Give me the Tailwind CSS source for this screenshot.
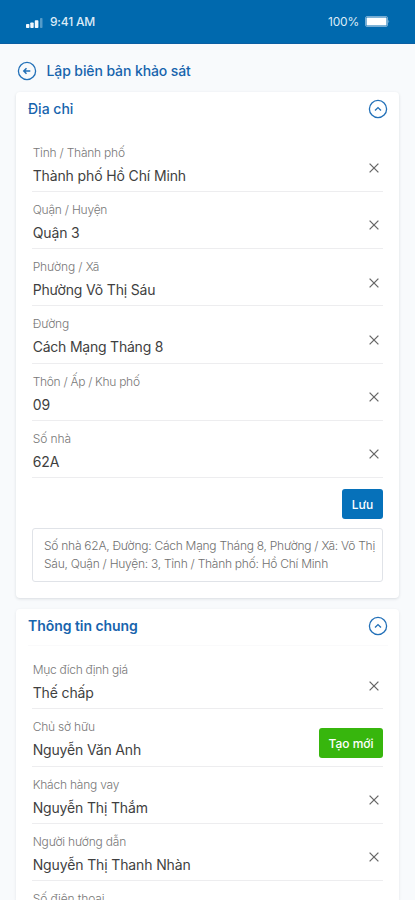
<!DOCTYPE html>
<html lang="vi">
<head>
<meta charset="utf-8">
<title>Lập biên bản khảo sát</title>
<script src="https://cdn.jsdelivr.net/npm/@tailwindcss/browser@4"></script>
</head>
<body class="bg-[#f8fafc] font-['Inter','Noto_Sans',sans-serif] w-[415px] h-[900px] overflow-hidden">
<svg class="hidden">
  <symbol id="x" viewBox="0 0 10 10"><path d="M.6.6 9.4 9.4M9.4.6.6 9.4" fill="none" stroke="#686868" stroke-width="1.3"/></symbol>
  <symbol id="up" viewBox="0 0 20 20"><circle cx="10" cy="10" r="8.6" fill="none" stroke="#2270b8" stroke-width="1.3"/><path d="M7 11.4 10 8.6l3 2.8" fill="none" stroke="#2270b8" stroke-width="1.4"/></symbol>
</svg>
<header class="h-11 bg-[#0069ae] flex items-center justify-between pl-[26px] pr-[25px] text-white border-b border-[#0a5fa3]">
  <div class="flex items-center gap-[7px]">
    <svg class="w-[17px] h-[10px] mt-[2px]" viewBox="0 0 17 10" fill="#f2f8fd"><rect y="6" width="3.4" height="4" rx=".8"/><rect x="4.3" y="4.5" width="3.4" height="5.5" rx=".8"/><rect x="8.8" y="2.2" width="3.6" height="7.8" rx=".8"/><rect x="14" width="2.5" height="10" rx=".8" opacity=".35"/></svg>
    <span class="text-[12px] font-medium tracking-[-0.2px] text-[#dcebf7] pt-px">9:41 AM</span>
  </div>
  <div class="flex items-center gap-1.5">
    <span class="text-[12px] tracking-[-0.2px] text-[#dcebf7] pt-px">100%</span>
    <svg class="w-[25px] h-[11px]" viewBox="0 0 25 11"><rect x=".5" y=".5" width="22" height="10" rx="1.5" fill="none" stroke="#76acd3"/><rect x="1.5" y="1.5" width="20" height="8" rx=".6" fill="#fff"/><path d="M23.5 3.8q1.4 1.7 0 3.4z" fill="#a5cae5"/></svg>
  </div>
</header>
<div class="h-12 flex items-center pl-[16.5px] pt-[5px] gap-[10px]">
  <svg class="size-5" viewBox="0 0 20 20" fill="none" stroke="#2270b8"><circle cx="10" cy="10" r="8.6" stroke-width="1.3"/><path d="M13.3 10H7.5M9.5 7.3 6.8 10l2.7 2.7" stroke-width="1.5"/></svg>
  <h1 class="text-[14px] font-medium tracking-[-0.1px] text-[#1764ad] whitespace-nowrap">Lập biên bản khảo sát</h1>
</div>
<main class="px-4 flex flex-col gap-[11px]">
  <section class="h-[506px] bg-white rounded-[4px] shadow-[0_1px_3px_rgba(30,41,59,0.14)] px-4">
    <div class="h-[42.5px] -ml-1 -mr-[5px] flex items-center justify-between pb-[9px]">
      <h2 class="text-[14px] font-medium text-[#1764ad] whitespace-nowrap">Địa chỉ</h2><svg class="size-5"><use href="#up"/></svg>
    </div>
    <div class="h-[57.25px] border-b border-[#ededef] flex justify-between pt-[9px] pr-1"><div class="whitespace-nowrap pl-[0.7px]"><p class="text-[12px] leading-[17px] font-light tracking-[-0.22px] text-[#787878]">Tỉnh / Thành phố</p><p class="text-[14px] leading-[20px] mt-[5px] tracking-[-0.13px] text-[#3f3f3f]">Thành phố Hồ Chí Minh</p></div><svg class="size-[10px] mt-[19.5px]"><use href="#x"/></svg></div>
    <div class="h-[57.25px] border-b border-[#ededef] flex justify-between pt-[9px] pr-1"><div class="whitespace-nowrap pl-[0.7px]"><p class="text-[12px] leading-[17px] font-light tracking-[-0.22px] text-[#787878]">Quận / Huyện</p><p class="text-[14px] leading-[20px] mt-[5px] tracking-[-0.13px] text-[#3f3f3f]">Quận 3</p></div><svg class="size-[10px] mt-[19.5px]"><use href="#x"/></svg></div>
    <div class="h-[57.25px] border-b border-[#ededef] flex justify-between pt-[9px] pr-1"><div class="whitespace-nowrap pl-[0.7px]"><p class="text-[12px] leading-[17px] font-light tracking-[-0.1px] text-[#787878]">Phường / Xã</p><p class="text-[14px] leading-[20px] mt-[5px] tracking-[-0.18px] text-[#3f3f3f]">Phường Võ Thị Sáu</p></div><svg class="size-[10px] mt-[19.5px]"><use href="#x"/></svg></div>
    <div class="h-[57.25px] border-b border-[#ededef] flex justify-between pt-[9px] pr-1"><div class="whitespace-nowrap pl-[0.7px]"><p class="text-[12px] leading-[17px] font-light tracking-[-0.1px] text-[#787878]">Đường</p><p class="text-[14px] leading-[20px] mt-[5px] tracking-[-0.22px] text-[#3f3f3f]">Cách Mạng Tháng 8</p></div><svg class="size-[10px] mt-[19.5px]"><use href="#x"/></svg></div>
    <div class="h-[57.25px] border-b border-[#ededef] flex justify-between pt-[9px] pr-1"><div class="whitespace-nowrap pl-[0.7px]"><p class="text-[12px] leading-[17px] font-light tracking-[-0.3px] text-[#787878]">Thôn / Ấp / Khu phố</p><p class="text-[14px] leading-[20px] mt-[5px] tracking-[-0.13px] text-[#3f3f3f]">09</p></div><svg class="size-[10px] mt-[19.5px]"><use href="#x"/></svg></div>
    <div class="h-[57.25px] border-b border-[#ededef] flex justify-between pt-[9px] pr-1"><div class="whitespace-nowrap pl-[0.7px]"><p class="text-[12px] leading-[17px] font-light tracking-[-0.1px] text-[#787878]">Số nhà</p><p class="text-[14px] leading-[20px] mt-[5px] tracking-[-0.13px] text-[#3f3f3f]">62A</p></div><svg class="size-[10px] mt-[19.5px]"><use href="#x"/></svg></div>
    <div class="flex justify-end pt-[11px]"><button class="w-[41px] h-[30px] rounded-[3px] bg-[#0671ba] text-white text-[12px] font-medium pt-px">Lưu</button></div>
    <div class="mt-[9px] h-[54px] border border-[#e0e3e8] rounded-[3px] pl-[11px] pt-[8px] text-[12px] leading-[18px] font-light text-[#707070] whitespace-nowrap"><p class="tracking-[-0.26px]">Số nhà 62A, Đường: Cách Mạng Tháng 8, Phường / Xã: Võ Thị</p><p class="tracking-[-0.26px]">Sáu, Quận / Huyện: 3, Tỉnh / Thành phố: Hồ Chí Minh</p></div>
  </section>
  <section class="h-[291px] bg-white rounded-t-[4px] shadow-[0_1px_3px_rgba(30,41,59,0.10)] px-4 overflow-hidden">
    <div class="h-[37px] -ml-1 -mr-[5px] flex items-center justify-between pb-[3px] border-b border-[#fafafb]">
      <h2 class="text-[14px] font-semibold tracking-[-0.05px] text-[#1764ad] whitespace-nowrap">Thông tin chung</h2><svg class="size-5"><use href="#up"/></svg>
    </div>
    <div class="mt-[6px] h-[57.25px] border-b border-[#ededef] flex justify-between pt-[9px] pr-1"><div class="whitespace-nowrap pl-[0.7px]"><p class="text-[12px] leading-[17px] font-light tracking-[-0.3px] text-[#787878]">Mục đích định giá</p><p class="text-[14px] leading-[20px] mt-[5px] tracking-[-0.13px] text-[#3f3f3f]">Thế chấp</p></div><svg class="size-[10px] mt-[19.5px]"><use href="#x"/></svg></div>
    <div class="h-[57.25px] border-b border-[#ededef] flex justify-between pt-[9px]"><div class="whitespace-nowrap pl-[0.7px]"><p class="text-[12px] leading-[17px] font-light tracking-[-0.22px] text-[#787878]">Chủ sở hữu</p><p class="text-[14px] leading-[20px] mt-[5px] tracking-[-0.16px] text-[#3f3f3f]">Nguyễn Văn Anh</p></div><button class="mt-[10px] w-16 h-[30px] rounded-[3px] bg-[#37b60d] text-white text-[12px] font-medium pt-px">Tạo mới</button></div>
    <div class="h-[57.25px] border-b border-[#ededef] flex justify-between pt-[9px] pr-1"><div class="whitespace-nowrap pl-[0.7px]"><p class="text-[12px] leading-[17px] font-light tracking-[-0.22px] text-[#787878]">Khách hàng vay</p><p class="text-[14px] leading-[20px] mt-[5px] tracking-[-0.16px] text-[#3f3f3f]">Nguyễn Thị Thắm</p></div><svg class="size-[10px] mt-[19.5px]"><use href="#x"/></svg></div>
    <div class="h-[57.25px] border-b border-[#ededef] flex justify-between pt-[9px] pr-1"><div class="whitespace-nowrap pl-[0.7px]"><p class="text-[12px] leading-[17px] font-light tracking-[-0.2px] text-[#787878]">Người hướng dẫn</p><p class="text-[14px] leading-[20px] mt-[5px] tracking-[-0.13px] text-[#3f3f3f]">Nguyễn Thị Thanh Nhàn</p></div><svg class="size-[10px] mt-[19.5px]"><use href="#x"/></svg></div>
    <div class="pt-[9px] pl-[0.7px]"><p class="text-[12px] leading-[17px] font-light tracking-[-0.1px] text-[#787878]">Số điện thoại</p></div>
  </section>
</main>
</body>
</html>
